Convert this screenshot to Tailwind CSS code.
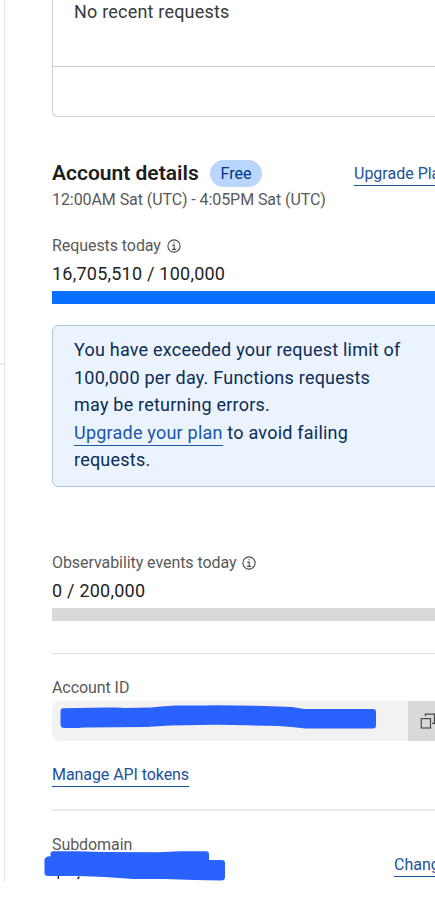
<!DOCTYPE html>
<html lang="en">
  <head>
    <meta charset="UTF-8" />
    <meta name="viewport" content="width=device-width, initial-scale=1.0" />
    <title>Account details</title>
    <script src="https://cdn.jsdelivr.net/npm/@tailwindcss/browser@4"></script>
  </head>
  <body class="h-[900px] overflow-hidden bg-white font-['Roboto',sans-serif] text-[#222]">
    <div class="flex h-[900px] overflow-hidden">
      <!-- Sidebar edge -->
      <div class="h-[883px] w-[5px] shrink-0 border-r border-[#e6e6e6]">
        <div class="mt-[363px] h-0.5 bg-[#ececec]"></div>
      </div>
      <main class="ml-[47px] w-[420px] shrink-0">
        <!-- Recent requests -->
        <section class="h-[117px] rounded-b-md border border-t-0 border-[#cfcfcf]">
          <p class="h-[67px] border-b border-[#cfcfcf] pl-[21px] text-[18px] leading-6 tracking-[0.2px] text-[#36393a]">No recent requests</p>
        </section>

        <!-- Account details -->
        <section class="mt-[43px]">
          <div class="flex h-[27px] items-center">
            <h2 class="w-[158px] text-[21px] leading-[27px] font-semibold whitespace-nowrap text-[#1d1d1d]">Account details</h2>
            <span class="h-[27px] w-[52px] rounded-full bg-[#b9d6ff] text-center text-[16px] leading-[27px] text-[#003681]">Free</span>
            <a href="#" class="ml-[92px] h-6 border-b border-[#1b5299] text-[16px] leading-6 whitespace-nowrap text-[#1b5299]">Upgrade Plan</a>
          </div>
          <p class="h-6 text-[16px] leading-[26px] tracking-[-0.07px] text-[#595959]">12:00AM Sat (UTC) - 4:05PM Sat (UTC)</p>
        </section>

        <!-- Requests usage -->
        <section class="mt-[23px]">
          <div class="flex h-6 items-center text-[16px] leading-6 tracking-[-0.07px] text-[#595959]">
            <span>Requests today</span>
            <svg class="ml-1.5 size-[14px]" viewBox="0 0 14 14" fill="none" stroke="#4a4a4a" stroke-width="1.1">
              <circle cx="7" cy="7" r="6.1" />
              <path d="M5.3 6.1H7.2V10.4M5 10.4H9.2M6.4 3.8H7.8" />
            </svg>
          </div>
          <p class="mt-0.5 h-7 text-[18px] leading-7 tracking-[0.23px] text-[#222]">16,705,510 / 100,000</p>
          <div class="mt-[3px] h-[13px] bg-[#086fff]"></div>
        </section>

        <!-- Limit notice -->
        <div class="mt-[21px] h-[162px] rounded-md border border-[#a9c9dd] bg-[#ebf3ff] pt-[10px] pl-[21px] text-[18px] leading-[27.6px] tracking-[0.22px] whitespace-nowrap text-[#0b2c55]">
          <p>You have exceeded your request limit of</p>
          <p>100,000 per day. Functions requests</p>
          <p>may be returning errors.</p>
          <p><a href="#" class="border-b border-[#1b56a8] pb-0.5 text-[#1b56a8]">Upgrade your plan</a> to avoid failing</p>
          <p>requests.</p>
        </div>

        <!-- Observability usage -->
        <section class="mt-16">
          <div class="flex h-6 items-center text-[16px] leading-6 tracking-[-0.07px] text-[#595959]">
            <span>Observability events today</span>
            <svg class="ml-1.5 size-[14px]" viewBox="0 0 14 14" fill="none" stroke="#4a4a4a" stroke-width="1.1">
              <circle cx="7" cy="7" r="6.1" />
              <path d="M5.3 6.1H7.2V10.4M5 10.4H9.2M6.4 3.8H7.8" />
            </svg>
          </div>
          <p class="mt-0.5 h-7 text-[18px] leading-7 tracking-[0.23px] text-[#222]">0 / 200,000</p>
          <div class="mt-[3px] h-[13px] bg-[#d9d9d9]"></div>
        </section>

        <!-- Account ID -->
        <section class="mt-8 border-t border-[#e0e0e0] pt-[22px]">
          <h3 class="h-6 text-[16px] leading-6 tracking-[-0.07px] text-[#595959]">Account ID</h3>
          <div class="mt-px flex h-10 overflow-hidden rounded-lg bg-[#f2f2f2]">
            <svg class="mt-1 ml-2 h-6 w-[316px]" viewBox="0 0 316 24" fill="#2962ff">
              <path d="M3 3.3L48 2.6L56 2.4L66 3L78 2.8L91 2.4L101 1.6L116 0.6H145L156 0.3L205 1L232 2L244 4H313Q316 4 316 7V20Q316 23.5 313 23.5H245L232 22L218 21L186 20.3L156 19.8L110 20.5L86 22L56 22.3L24 22.5L18 23H4Q0.5 23 0.5 19V7Q0.5 3.3 3 3.3Z" />
            </svg>
            <button class="ml-8 flex w-16 items-center bg-[#d9d9d9] pl-3" aria-label="Copy">
              <svg class="size-4" viewBox="0 0 16 16" fill="none" stroke="#4a4a4a" stroke-width="1.2">
                <rect x="1.3" y="5.6" width="9.2" height="9.4" />
                <path d="M5.4 3.3V1.1H14.4V10.4H12" />
              </svg>
            </button>
          </div>
          <div class="mt-[22px] flex">
            <a href="#" class="h-6 border-b border-[#1b5299] text-[16px] leading-6 tracking-[-0.07px] text-[#1b5299]">Manage API tokens</a>
          </div>
        </section>

        <!-- Subdomain -->
        <section class="mt-[22px] border-t-2 border-[#ececec] pt-[22px]">
          <h3 class="h-6 text-[16px] leading-6 tracking-[-0.07px] text-[#595959]">Subdomain</h3>
          <div class="-mt-1.5 -ml-2 flex">
            <svg class="h-[31px] w-[182px]" viewBox="0 0 182 31">
              <path d="M14.3 24V28M35 25.5Q35 27.5 33.2 27.5" fill="none" stroke="#222" stroke-width="1.4" />
              <path d="M9 0.2H32L60 1L115 1.3L136 0.2H162Q165 0.2 165 3V9H178Q181 9 181 12V26Q181 29.5 177 29.5L150 29L120 28L90 28L60 26L35 25H4Q0.5 25 0.5 22V9Q0.5 5.5 6.5 5.2V3Q6.5 0.2 9 0.2Z" fill="#2962ff" />
            </svg>
            <a href="#" class="mt-0.5 ml-[168px] h-6 border-b border-[#1b5299] text-[16px] leading-6 text-[#1b5299]">Change</a>
          </div>
        </section>
      </main>
    </div>
  </body>
</html>
